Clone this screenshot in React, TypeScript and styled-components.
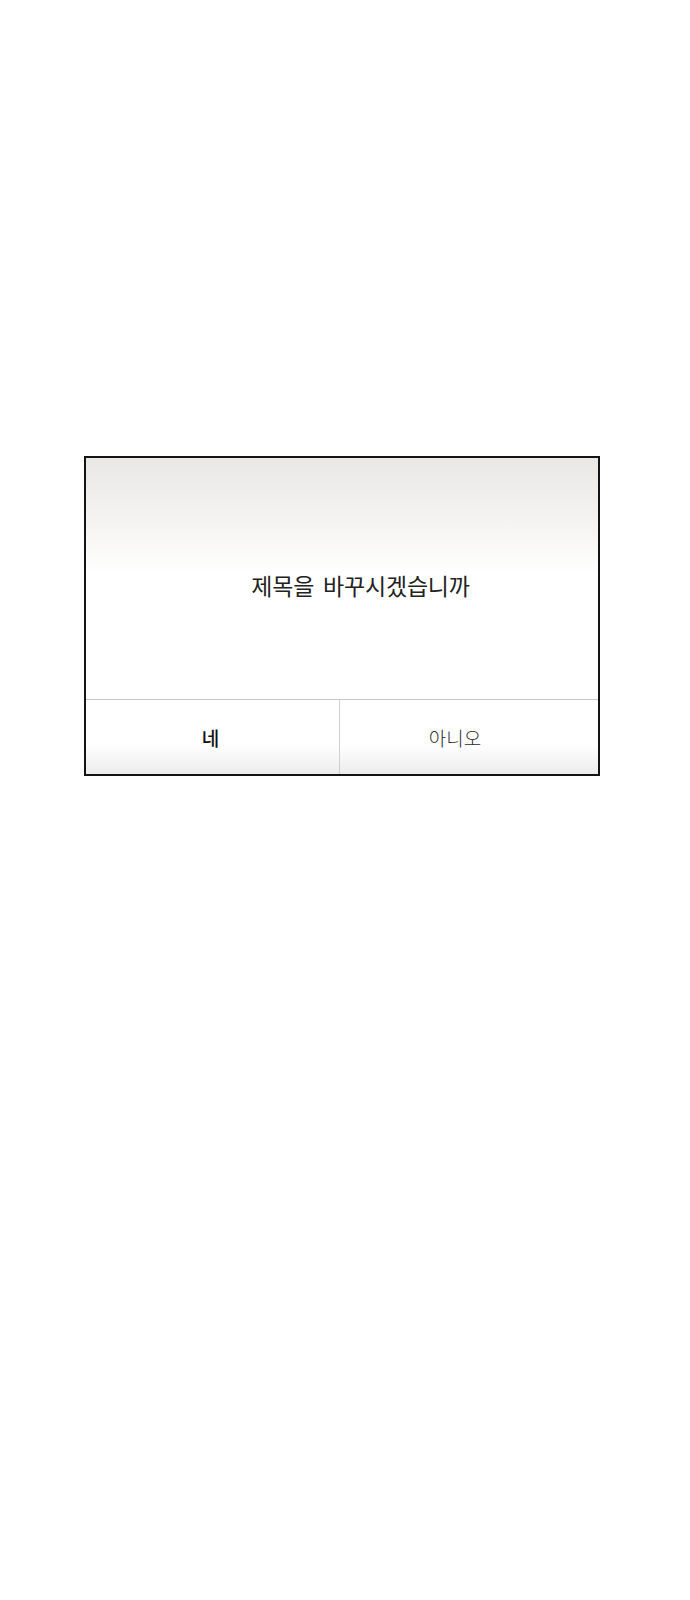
import React from 'react';
import styled, { createGlobalStyle } from 'styled-components';

const GlobalStyle = createGlobalStyle`
  html, body {
    margin: 0;
    padding: 0;
    background: #ffffff;
  }
  body {
    font-family: "Noto Sans CJK KR", "Noto Sans", sans-serif;
  }
`;

const Page = styled.div`
  min-height: 1600px;
  box-sizing: border-box;
  padding: 456px 0 0 84px;
`;

const Dialog = styled.div`
  width: 516px;
  height: 320px;
  box-sizing: border-box;
  border: 2px solid #141414;
  display: flex;
  flex-direction: column;
  background: #ffffff;
`;

const Message = styled.div`
  height: 242px;
  box-sizing: border-box;
  padding: 13px 0 0 37px;
  display: flex;
  align-items: center;
  justify-content: center;
  background: linear-gradient(to bottom, #eae8e5 0%, #f5f4f2 28%, #ffffff 48%, #ffffff 100%);
  border-bottom: 1px solid #c9c9c9;
`;

const MessageText = styled.p`
  margin: 0;
  font-size: 23px;
  letter-spacing: -0.2px;
  word-spacing: 4px;
  color: #222222;
  font-weight: 400;
`;

const Actions = styled.div`
  flex: 1;
  display: grid;
  grid-template-columns: 253px 1fr;
`;

const ActionButton = styled.button<{ $primary?: boolean; $shift: number }>`
  appearance: none;
  border: none;
  border-left: ${({ $primary }) => ($primary ? 'none' : '1px solid #cfcfcf')};
  margin: 0;
  padding: 0 ${({ $shift }) => ($shift < 0 ? -$shift * 2 : 0)}px 0 0;
  background: linear-gradient(to bottom, #ffffff 0%, #ffffff 60%, #ececec 100%);
  font-family: inherit;
  font-size: 19px;
  font-weight: ${({ $primary }) => ($primary ? 500 : 300)};
  color: ${({ $primary }) => ($primary ? '#111111' : '#2a2a2a')};
  cursor: pointer;
  display: flex;
  align-items: center;
  justify-content: center;
`;

export default function App() {
  return (
    <>
      <GlobalStyle />
      <Page>
        <Dialog role="dialog">
          <Message>
            <MessageText>제목을 바꾸시겠습니까</MessageText>
          </Message>
          <Actions>
            <ActionButton $primary $shift={-2}>네</ActionButton>
            <ActionButton $shift={-14}>아니오</ActionButton>
          </Actions>
        </Dialog>
      </Page>
    </>
  );
}
